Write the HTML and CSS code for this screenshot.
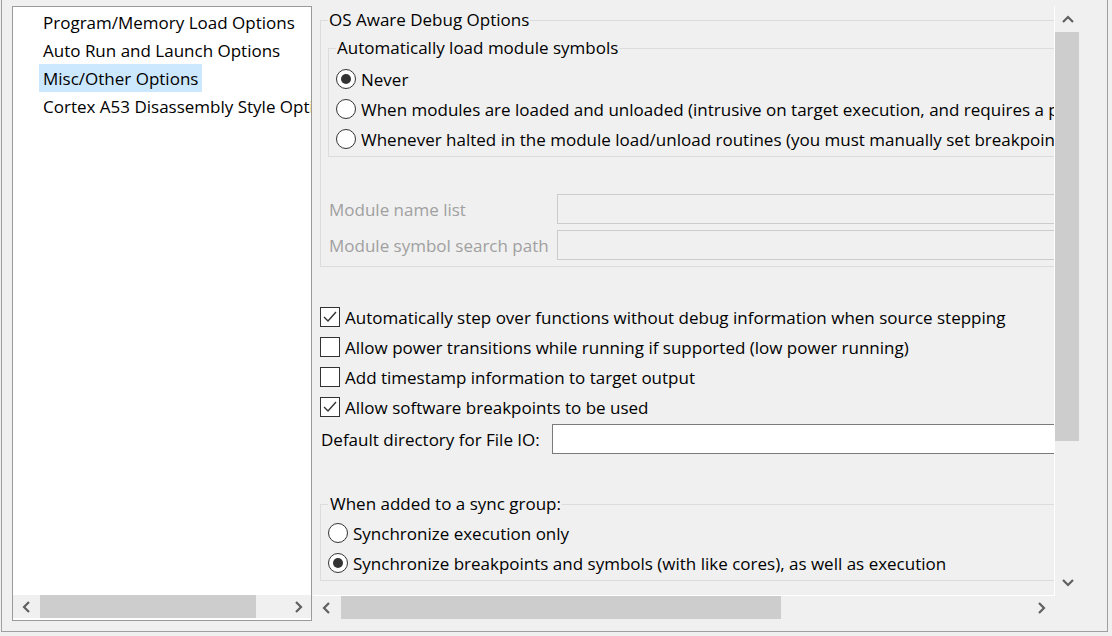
FILE: index.html
```html
<!DOCTYPE html>
<html>
<head>
<meta charset="utf-8">
<link rel="stylesheet" href="styles.css">
</head>
<body>
<div class="window">
  <div class="tree">
    <ul class="tree-list">
      <li><span class="item">Program/Memory Load Options</span></li>
      <li><span class="item">Auto Run and Launch Options</span></li>
      <li><span class="item selected">Misc/Other Options</span></li>
      <li><span class="item">Cortex A53 Disassembly Style Options</span></li>
    </ul>
    <div class="hscroll tree-hscroll">
      <div class="arrow-btn btn-left"><svg width="10" height="12" viewBox="0 0 10 12"><polyline points="7,1 2,6 7,11" fill="none" stroke="#606060" stroke-width="2.2"/></svg></div>
      <div class="hthumb tree-thumb"></div>
      <div class="spacer"></div>
      <div class="arrow-btn btn-right"><svg width="10" height="12" viewBox="0 0 10 12"><polyline points="3,1 8,6 3,11" fill="none" stroke="#606060" stroke-width="2.2"/></svg></div>
    </div>
  </div>

  <div class="pane">
    <div class="viewport">
      <div class="content">
        <fieldset class="group os-group">
          <legend class="legend">OS Aware Debug Options</legend>
          <fieldset class="group sym-group">
            <legend class="legend legend-inner">Automatically load module symbols</legend>
            <div class="opt"><span class="radio on"></span><span>Never</span></div>
            <div class="opt"><span class="radio"></span><span>When modules are loaded and unloaded (intrusive on target execution, and requires a process manager)</span></div>
            <div class="opt"><span class="radio"></span><span>Whenever halted in the module load/unload routines (you must manually set breakpoints)</span></div>
          </fieldset>
          <div class="module-grid">
            <span class="dis-label">Module name list</span>
            <span class="textbox disabled"></span>
            <span class="dis-label">Module symbol search path</span>
            <span class="textbox disabled"></span>
          </div>
        </fieldset>

        <div class="checks">
          <div class="opt"><span class="check"><svg width="18" height="18" viewBox="0 0 18 18"><polyline points="3,9 7,13 15,4" fill="none" stroke="#333" stroke-width="1.4"/></svg></span><span class="check-text">Automatically step over functions without debug information when source stepping</span></div>
          <div class="opt"><span class="check"></span><span class="check-text">Allow power transitions while running if supported (low power running)</span></div>
          <div class="opt"><span class="check"></span><span class="check-text">Add timestamp information to target output</span></div>
          <div class="opt"><span class="check"><svg width="18" height="18" viewBox="0 0 18 18"><polyline points="3,9 7,13 15,4" fill="none" stroke="#333" stroke-width="1.4"/></svg></span><span class="check-text">Allow software breakpoints to be used</span></div>
          <div class="dir-row">
            <span class="dir-label">Default directory for File IO:</span>
            <span class="textbox enabled"></span>
          </div>
        </div>

        <fieldset class="group sync-group">
          <legend class="legend legend-sync">When added to a sync group:</legend>
          <div class="opt"><span class="radio"></span><span>Synchronize execution only</span></div>
          <div class="opt"><span class="radio on"></span><span>Synchronize breakpoints and symbols (with like cores), as well as execution</span></div>
        </fieldset>
      </div>
    </div>

    <div class="vscroll">
      <div class="varrow"><svg width="12" height="8" viewBox="0 0 12 8"><polyline points="1,7 6,2 11,7" fill="none" stroke="#606060" stroke-width="2.2"/></svg></div>
      <div class="vthumb"></div>
      <div class="spacer"></div>
      <div class="varrow"><svg width="12" height="8" viewBox="0 0 12 8"><polyline points="1,1 6,6 11,1" fill="none" stroke="#606060" stroke-width="2.2"/></svg></div>
    </div>

    <div class="hscroll pane-hscroll">
      <div class="arrow-btn btn-left"><svg width="10" height="12" viewBox="0 0 10 12"><polyline points="7,1 2,6 7,11" fill="none" stroke="#606060" stroke-width="2.2"/></svg></div>
      <div class="hthumb pane-thumb"></div>
      <div class="spacer"></div>
      <div class="arrow-btn btn-right"><svg width="10" height="12" viewBox="0 0 10 12"><polyline points="3,1 8,6 3,11" fill="none" stroke="#606060" stroke-width="2.2"/></svg></div>
    </div>
    <div class="corner"></div>
  </div>
</div>
</body>
</html>
```

FILE: styles.css
```css
html, body {
  margin: 0;
  padding: 0;
  background: #f0f0f0;
}

body {
  font-family: "Open Sans", "Noto Sans", sans-serif;
  font-size: 17px;
  color: #000;
  width: 1112px;
  height: 636px;
  overflow: hidden;
}

.window {
  box-sizing: border-box;
  width: 1107px;
  height: 632px;
  margin-left: 1px;
  border: 1px solid #a0a0a0;
  border-top: none;
  padding: 6px 0 0 10px;
  display: flex;
  align-items: flex-start;
  gap: 1px;
}

/* ---------- left tree ---------- */
.tree {
  box-sizing: border-box;
  width: 300px;
  height: 615px;
  border: 1px solid #9a9a9a;
  background: #fff;
  display: flex;
  flex-direction: column;
  overflow: hidden;
}

.tree-list {
  list-style: none;
  margin: 0;
  padding: 1px 0 0 26px;
  flex: 1;
  white-space: nowrap;
}

.tree-list li {
  height: 28px;
}

.item {
  display: inline-block;
  box-sizing: border-box;
  padding: 1px 4px 0;
  height: 28px;
  line-height: 27px;
}

.item.selected {
  background: #cce8ff;
}

/* ---------- scrollbars ---------- */
.hscroll {
  display: flex;
  align-items: stretch;
  background: #f0f0f0;
}

.tree-hscroll {
  height: 23px;
  margin-bottom: 2px;
}

.arrow-btn {
  width: 27px;
  display: flex;
  align-items: center;
  justify-content: center;
  flex: none;
}

.hthumb {
  background: #cdcdcd;
  flex: none;
}

.tree-thumb {
  width: 216px;
}

.pane-thumb {
  width: 440px;
}

.spacer {
  flex: 1;
}

/* ---------- right pane ---------- */
.pane {
  width: 767px;
  height: 613px;
  display: grid;
  grid-template-columns: 742px 25px;
  grid-template-rows: 590px 23px;
}

.viewport {
  box-sizing: border-box;
  border-right: 1px solid #fff;
  border-bottom: 1px solid #fff;
  overflow: hidden;
}

.content {
  width: 1200px;
  padding-left: 7px;
}

.vscroll {
  display: flex;
  flex-direction: column;
  background: #f0f0f0;
}

.varrow {
  height: 26px;
  display: flex;
  align-items: center;
  justify-content: center;
  flex: none;
}

.vthumb {
  height: 409px;
  background: #cdcdcd;
  margin-right: 1px;
  flex: none;
}

.pane-hscroll .btn-left {
  width: 28px;
}

.pane-hscroll .btn-right {
  width: 28px;
}

.corner {
  background: #f0f0f0;
}

/* ---------- group boxes ---------- */
.group {
  margin: 0;
  border: 1px solid #dcdcdc;
  min-width: 0;
}

.legend {
  padding: 0 1px;
  line-height: 24px;
  height: 24px;
}

.os-group {
  margin-top: 2px;
  padding: 0 0 6px 7px;
}

.sym-group {
  margin-top: 5px;
  padding: 5px 0 2px 7px;
}

.legend-inner {
  line-height: 22px;
  height: 22px;
}

.sync-group {
  margin-top: 38px;
  padding: 2px 0 2px 7px;
}

.legend-sync {
  padding: 0 1px 0 2px;
}

/* ---------- options ---------- */
.opt {
  display: flex;
  align-items: center;
  height: 30px;
  white-space: nowrap;
}

.radio {
  box-sizing: border-box;
  width: 20px;
  height: 20px;
  border: 1px solid #333;
  border-radius: 50%;
  background: #fff;
  margin-right: 5px;
  flex: none;
  display: flex;
  align-items: center;
  justify-content: center;
}

.radio.on::after {
  content: "";
  width: 10px;
  height: 10px;
  border-radius: 50%;
  background: #333;
}

.check {
  box-sizing: border-box;
  width: 20px;
  height: 20px;
  border: 1px solid #333;
  background: #fff;
  margin-right: 5px;
  flex: none;
  display: flex;
  align-items: center;
  justify-content: center;
}

/* ---------- module rows ---------- */
.module-grid {
  display: grid;
  grid-template-columns: 229px 700px;
  grid-auto-rows: 30px;
  row-gap: 6px;
  margin-top: 37px;
  align-items: center;
}

.dis-label {
  color: #a0a0a0;
  padding-left: 1px;
  white-space: nowrap;
}

.textbox {
  box-sizing: border-box;
  height: 30px;
  display: block;
}

.textbox.disabled {
  border: 1px solid #cccccc;
  background: #f0f0f0;
}

.textbox.enabled {
  border: 1px solid #7a7a7a;
  background: #fff;
  width: 700px;
}

/* ---------- checks ---------- */
.checks {
  margin-top: 35px;
}

.dir-row {
  display: flex;
  align-items: center;
  height: 30px;
  margin-top: 2px;
}

.dir-label {
  width: 231px;
  padding-left: 1px;
  flex: none;
  white-space: nowrap;
}
```
